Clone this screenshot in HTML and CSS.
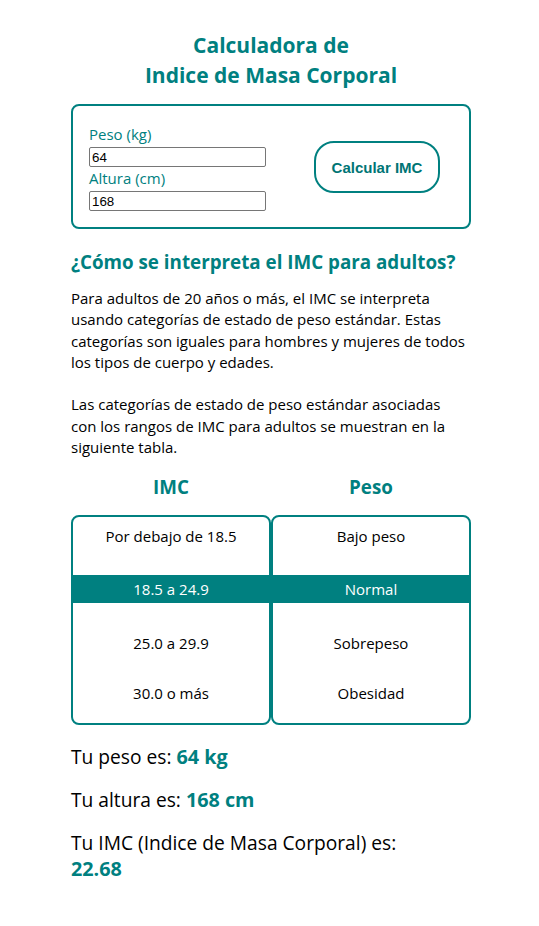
FILE: index.html
```html
<!DOCTYPE html>
<html lang="es">
<head>
<meta charset="utf-8">
<title>Calculadora de IMC</title>
<link rel="stylesheet" href="styles.css">
</head>
<body>
<main class="page">
  <h1 class="title">Calculadora de<br>Indice de Masa Corporal</h1>

  <form class="calc">
    <div class="fields">
      <label class="label" for="peso">Peso (kg)</label>
      <input class="input" id="peso" type="text" value="64">
      <label class="label" for="altura">Altura (cm)</label>
      <input class="input" id="altura" type="text" value="168">
    </div>
    <button class="btn" type="button">Calcular IMC</button>
  </form>

  <h3 class="subtitle">¿Cómo se interpreta el IMC para adultos?</h3>
  <p class="text">Para adultos de 20 años o más, el IMC se interpreta usando categorías de estado de peso estándar. Estas categorías son iguales para hombres y mujeres de todos los tipos de cuerpo y edades.<br><br>Las categorías de estado de peso estándar asociadas con los rangos de IMC para adultos se muestran en la siguiente tabla.</p>

  <div class="table-head">
    <div class="th">IMC</div>
    <div class="th">Peso</div>
  </div>
  <div class="table">
    <div class="col">
      <div class="cell r1">Por debajo de 18.5</div>
      <div class="cell r2 active">18.5 a 24.9</div>
      <div class="cell r3">25.0 a 29.9</div>
      <div class="cell r4">30.0 o más</div>
    </div>
    <div class="col">
      <div class="cell r1">Bajo peso</div>
      <div class="cell r2 active">Normal</div>
      <div class="cell r3">Sobrepeso</div>
      <div class="cell r4">Obesidad</div>
    </div>
  </div>

  <div class="results">
    <p class="res">Tu peso es: <strong class="val">64 kg</strong></p>
    <p class="res">Tu altura es: <strong class="val">168 cm</strong></p>
    <p class="res">Tu IMC (Indice de Masa Corporal) es:<strong class="val block">22.68</strong></p>
  </div>
</main>
</body>
</html>
```
FILE: styles.css
```css
* { box-sizing: border-box; }
body {
  margin: 0;
  padding: 0 0 0 3px;
  background: #fff;
  color: #000;
  font-family: "Open Sans", "Noto Sans", sans-serif;
  font-size: 15px;
}
.page {
  width: 400px;
  margin: 0 auto;
  padding-bottom: 30px;
}
.title {
  margin: 30px 0 14px;
  text-align: center;
  color: #008080;
  font-size: 21px;
  line-height: 30px;
  font-weight: 700;
}
.calc {
  display: flex;
  align-items: center;
  gap: 48px;
  border: 2px solid #008080;
  border-radius: 8px;
  padding: 17px 16px 16px;
  margin: 0;
}
.fields {
  display: flex;
  flex-direction: column;
}
.label {
  display: block;
  color: #008080;
  font-size: 15px;
  line-height: 21px;
  padding-top: 1px;
  margin-bottom: 2px;
}
.input {
  display: block;
  width: 177px;
  height: 20px;
  margin: 0;
  padding: 1px 2px;
  border: 1px solid #767676;
  border-radius: 2px;
  font-family: "Liberation Sans", Arial, sans-serif;
  font-size: 13.333px;
  color: #000;
  background: #fff;
}
.btn {
  width: 126px;
  height: 52px;
  border: 2px solid #008080;
  border-radius: 20px;
  background: #fff;
  color: #007575;
  font-family: "Liberation Sans", Arial, sans-serif;
  font-size: 15px;
  font-weight: 700;
  padding: 0;
}
.subtitle {
  margin: 21px 0 0;
  color: #008080;
  font-size: 18.8px;
  line-height: 25px;
  font-weight: 700;
}
.text {
  margin: 13px 0 0;
  padding-right: 4px;
  font-size: 15px;
  line-height: 21.3px;
}
.table-head {
  display: flex;
  margin-top: 17px;
}
.th {
  flex: 1;
  text-align: center;
  color: #008080;
  font-size: 18.8px;
  line-height: 25px;
  font-weight: 700;
}
.table {
  display: flex;
  margin-top: 15px;
}
.col {
  flex: 1;
  border: 2px solid #008080;
  border-radius: 8px;
  overflow: hidden;
  padding-bottom: 19px;
}
.cell {
  text-align: center;
  font-size: 15px;
  line-height: 21px;
}
.r1 { padding: 9px 0 28px; }
.r2 { padding: 3.5px 0; }
.r3 { padding-top: 30px; }
.r4 { padding-top: 29px; }
.active {
  background: #008080;
  color: #fff;
}
.results {
  margin-top: 19px;
}
.res {
  margin: 0 0 17px;
  font-size: 19.2px;
  line-height: 26px;
}
.val {
  color: #008080;
  font-weight: 700;
  font-size: 1.03em;
}
.block { display: block; }
```
